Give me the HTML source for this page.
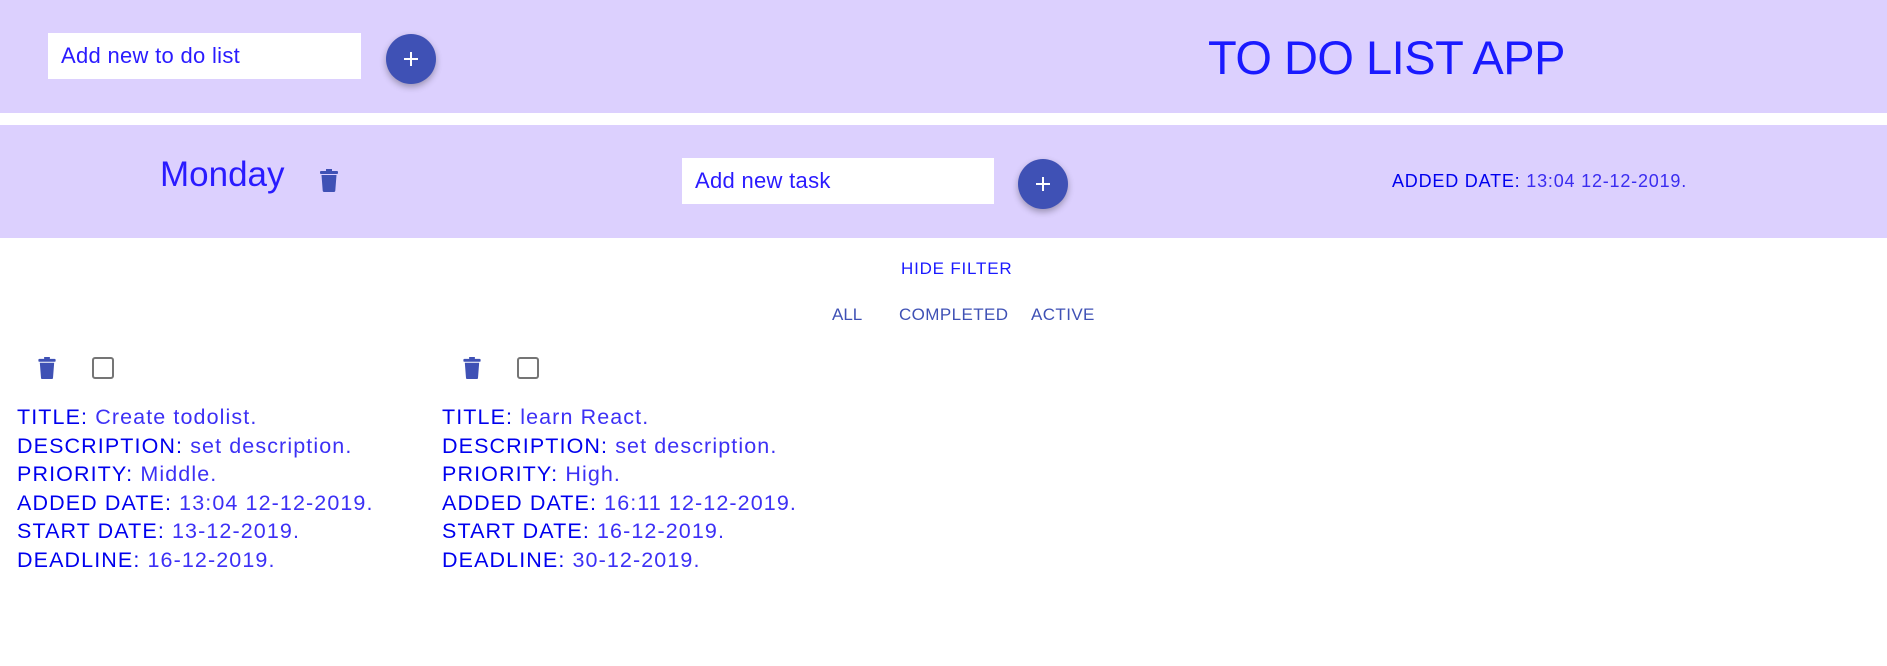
<!DOCTYPE html>
<html><head><meta charset="utf-8">
<style>
*{margin:0;padding:0;box-sizing:border-box}
body{width:1887px;height:666px;background:#fff;font-family:"Liberation Sans",sans-serif;position:relative;overflow:hidden}
.band{position:absolute;left:0;width:1887px;background:#dcd0fe}
.abs{position:absolute;white-space:nowrap}
.inp{position:absolute;background:#fff;color:#2a1bff;font-size:22px;padding-left:13px;display:flex;align-items:center;letter-spacing:0.3px}
.btn{position:absolute;width:50px;height:50px;border-radius:50%;background:#3f51b5;box-shadow:0 3px 7px rgba(0,0,0,.3)}
.btn:before{content:"";position:absolute;left:18px;top:24px;width:14px;height:2px;background:#fff}
.btn:after{content:"";position:absolute;left:24px;top:18px;width:2px;height:14px;background:#fff}
.lbl{color:#0000ee}
.val{color:#3a2cf0}
.card{position:absolute;top:403px;font-size:21.5px;line-height:28.5px;color:#0000ee;letter-spacing:1.1px}
.card .v{color:#3c30f5}
.flt{position:absolute;top:305px;font-size:17px;color:#3f51b5}
</style></head><body>
<div class="band" style="top:0;height:113px"></div>
<div class="band" style="top:125px;height:113px"></div>

<div class="inp" style="left:48px;top:33px;width:313px;height:46px">Add new to do list</div>
<div class="btn" style="left:386px;top:34px"></div>
<div class="abs" style="left:1208px;top:30px;font-size:47px;color:#1a1aff;letter-spacing:-0.5px">TO DO LIST APP</div>

<div class="abs" style="left:160px;top:155px;font-size:35px;color:#2a1bff">Monday</div>
<svg class="abs" style="left:320px;top:169px" width="18" height="23" viewBox="0 0 18 23"><rect x="0" y="2" width="18" height="3" rx="1" fill="#3f51b5"/><rect x="6" y="0" width="6" height="3" fill="#3f51b5"/><path d="M1.5 6h15l-1.2 15.5a1.5 1.5 0 0 1-1.5 1.5H4.2a1.5 1.5 0 0 1-1.5-1.5z" fill="#3f51b5"/></svg>
<div class="inp" style="left:682px;top:158px;width:312px;height:46px">Add new task</div>
<div class="btn" style="left:1018px;top:159px"></div>
<div class="abs" style="left:1392px;top:171px;font-size:18px;letter-spacing:0.8px"><span class="lbl">ADDED DATE:</span> <span class="val">13:04 12-12-2019.</span></div>

<div class="abs" style="left:901px;top:259px;font-size:17px;color:#1a1aff;letter-spacing:0.8px">HIDE FILTER</div>
<div class="flt" style="left:832px">ALL</div>
<div class="flt" style="left:899px;letter-spacing:0.4px">COMPLETED</div>
<div class="flt" style="left:1031px;letter-spacing:0.4px">ACTIVE</div>

<svg class="abs" style="left:38px;top:357px" width="18" height="22" viewBox="0 0 18 23"><rect x="0" y="2" width="18" height="3" rx="1" fill="#3f51b5"/><rect x="6" y="0" width="6" height="3" fill="#3f51b5"/><path d="M1.5 6h15l-1.2 15.5a1.5 1.5 0 0 1-1.5 1.5H4.2a1.5 1.5 0 0 1-1.5-1.5z" fill="#3f51b5"/></svg>
<div class="abs" style="left:92px;top:357px;width:22px;height:22px;border:2.5px solid #757575;border-radius:3px"></div>
<svg class="abs" style="left:463px;top:357px" width="18" height="22" viewBox="0 0 18 23"><rect x="0" y="2" width="18" height="3" rx="1" fill="#3f51b5"/><rect x="6" y="0" width="6" height="3" fill="#3f51b5"/><path d="M1.5 6h15l-1.2 15.5a1.5 1.5 0 0 1-1.5 1.5H4.2a1.5 1.5 0 0 1-1.5-1.5z" fill="#3f51b5"/></svg>
<div class="abs" style="left:517px;top:357px;width:22px;height:22px;border:2.5px solid #757575;border-radius:3px"></div>

<div class="card" style="left:17px">
<div>TITLE: <span class="v">Create todolist.</span></div>
<div>DESCRIPTION: <span class="v">set description.</span></div>
<div>PRIORITY: <span class="v">Middle.</span></div>
<div>ADDED DATE: <span class="v">13:04 12-12-2019.</span></div>
<div>START DATE: <span class="v">13-12-2019.</span></div>
<div>DEADLINE: <span class="v">16-12-2019.</span></div>
</div>
<div class="card" style="left:442px">
<div>TITLE: <span class="v">learn React.</span></div>
<div>DESCRIPTION: <span class="v">set description.</span></div>
<div>PRIORITY: <span class="v">High.</span></div>
<div>ADDED DATE: <span class="v">16:11 12-12-2019.</span></div>
<div>START DATE: <span class="v">16-12-2019.</span></div>
<div>DEADLINE: <span class="v">30-12-2019.</span></div>
</div>
</body></html>
